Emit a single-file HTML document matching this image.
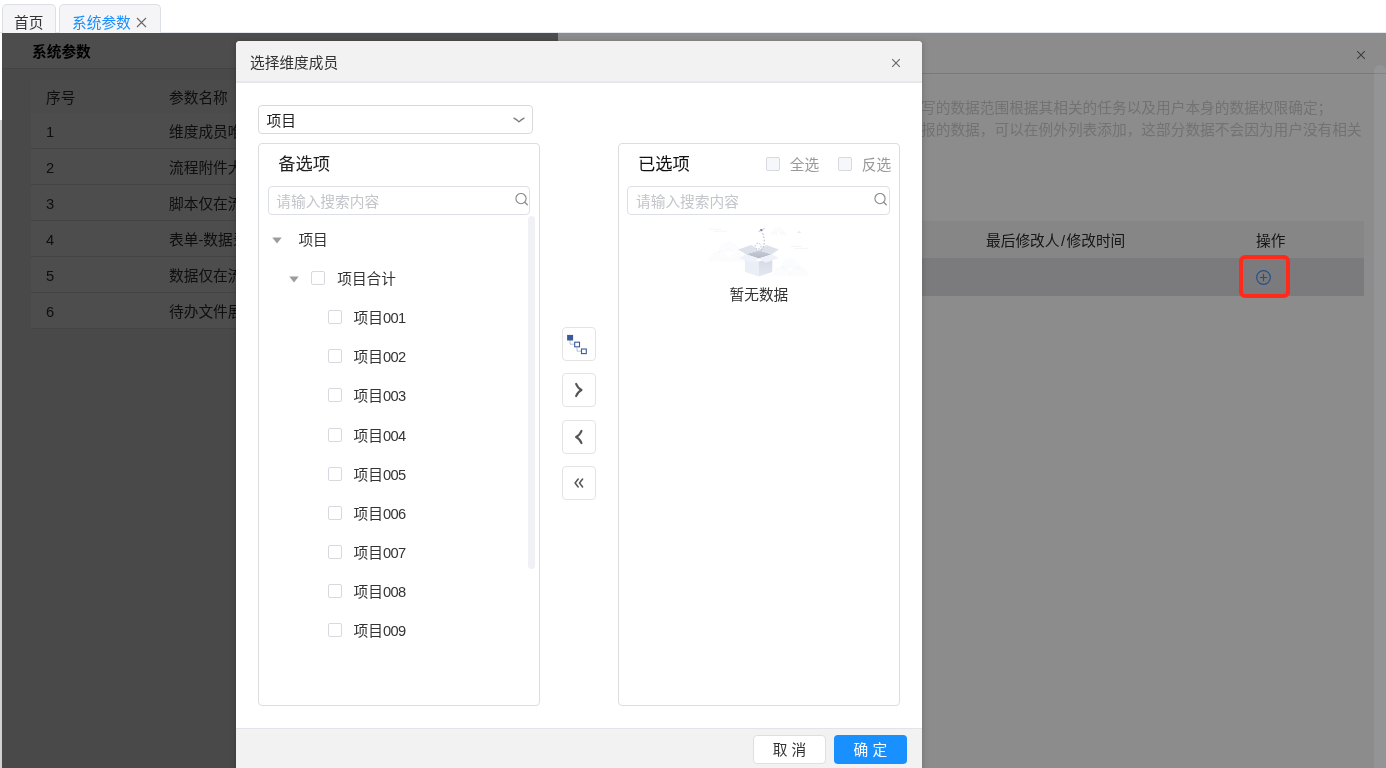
<!DOCTYPE html>
<html lang="zh-CN">
<head>
<meta charset="utf-8">
<title>系统参数</title>
<style>
*{box-sizing:border-box;margin:0;padding:0}
html,body{width:1386px;height:768px;overflow:hidden;background:#fff}
body{position:relative;font-family:"Liberation Sans","Noto Sans CJK SC",sans-serif;font-size:14.7px;color:#333}
.a{position:absolute}
.t{position:absolute;white-space:nowrap;line-height:20px;height:20px}
/* tabs */
.tab{position:absolute;top:4px;height:29px;background:#f5f5f7;border:1px solid #dcdfe6;border-bottom:none;border-radius:5px 5px 0 0}
/* left list panel */
#left{left:2px;top:33px;width:556px;height:735px;background:#f2f2f2;overflow:hidden}
#left .hd{left:0;top:0;width:556px;height:36px;background:#fff;border-bottom:1px solid #e0e0e0}
#left .th{left:29px;top:47px;width:527px;height:34px;background:#fafafa}
#left .tr{left:29px;width:527px;height:36px;background:#fff;border-bottom:1px solid #e4e4e4}
/* drawer */
#drawer{left:558px;top:33px;width:828px;height:735px;background:#fff;overflow:hidden}
.mask{position:absolute;background:rgba(0,0,0,.45)}
/* modal */
#modal{left:236px;top:41px;width:686px;height:740px;background:#fff;border-radius:4px;overflow:hidden;box-shadow:0 1px 6px rgba(0,0,0,.22)}
#modal .mh{left:0;top:0;width:686px;height:42px;background:#f2f2f2;border-bottom:2px solid #e6e8ee}
#modal .mf{left:0;top:687px;width:686px;height:60px;background:#f2f2f2;border-top:1px solid #e2e4ea}
.box{position:absolute;border:1px solid #dcdfe6;border-radius:4px;background:#fff}
.cb{position:absolute;width:14px;height:14px;border:1px solid #d6d9e0;border-radius:2px;background:#fff}
.cb.dis{background:#f5f7fa}
.ph{color:#c3c5cb}
.btn{position:absolute;width:34px;height:34px;border:1px solid #e4e4e4;border-radius:4px;background:#fff}
</style>
</head>
<body>
<div id="root" style="position:absolute;left:0;top:0;width:1386px;height:768px;will-change:transform;overflow:hidden">
<!-- tab bar -->
<div class="a" style="left:0;top:32px;width:1386px;height:1px;background:#e4e7ed"></div>
<div class="tab" style="left:2px;width:54px"></div>
<div class="tab" style="left:59px;width:102px"></div>
<div class="t" style="left:14px;top:13px;color:#333">首页</div>
<div class="t" style="left:72px;top:13px;color:#1890ff">系统参数</div>
<svg class="a" style="left:136px;top:17px" width="11" height="11" viewBox="0 0 11 11"><path d="M1 1L10 10M10 1L1 10" stroke="#666" stroke-width="1.1" fill="none"/></svg>
<!-- left strip -->
<div class="a" style="left:0;top:120px;width:2px;height:648px;background:#d2d2d2"></div>

<!-- left list panel -->
<div id="left" class="a">
  <div class="a hd"></div>
  <div class="t" style="left:30px;top:9px;font-weight:bold;color:#000">系统参数</div>
  <div class="a th"></div>
  <div class="t" style="left:44px;top:55px">序号</div>
  <div class="t" style="left:167px;top:55px">参数名称</div>
  <div class="a tr" style="top:80px"></div>
  <div class="a tr" style="top:116px"></div>
  <div class="a tr" style="top:152px"></div>
  <div class="a tr" style="top:188px"></div>
  <div class="a tr" style="top:224px"></div>
  <div class="a tr" style="top:260px"></div>
  <div class="t" style="left:44px;top:89px">1</div><div class="t" style="left:167px;top:89px">维度成员唯一性校验</div>
  <div class="t" style="left:44px;top:125px">2</div><div class="t" style="left:167px;top:125px">流程附件大小限制</div>
  <div class="t" style="left:44px;top:161px">3</div><div class="t" style="left:167px;top:161px">脚本仅在流程中执行</div>
  <div class="t" style="left:44px;top:197px">4</div><div class="t" style="left:167px;top:197px">表单-数据录入范围控制</div>
  <div class="t" style="left:44px;top:233px">5</div><div class="t" style="left:167px;top:233px">数据仅在流程中可填报</div>
  <div class="t" style="left:44px;top:269px">6</div><div class="t" style="left:167px;top:269px">待办文件展示方式</div>
  <div class="mask" style="left:0;top:0;width:556px;height:735px"></div>
</div>

<!-- drawer -->
<div id="drawer" class="a">
  <div class="a" style="left:0;top:40px;width:828px;height:1px;background:#dcdcdc"></div>
  <svg class="a" style="left:797.6px;top:16.7px" width="10" height="10" viewBox="0 0 10 10"><path d="M1.2 1.2L8.8 8.8M8.8 1.2L1.2 8.8" stroke="#707070" stroke-width="1.1" fill="none"/></svg>
  <div class="t" style="left:363px;top:65px;color:#d0d0d0">写的数据范围根据其相关的任务以及用户本身的数据权限确定；</div>
  <div class="t" style="left:363px;top:87px;color:#d0d0d0">报的数据，可以在例外列表添加，这部分数据不会因为用户没有相关</div>
  <div class="a" style="left:20px;top:188px;width:786px;height:37px;background:#f5f5f5"></div>
  <div class="a" style="left:20px;top:225px;width:786px;height:38px;background:#e0e1e5"></div>
  <div class="t" style="left:428px;top:198px;color:#2a2a2a">最后修改人<span style="margin:0 1.5px">/</span>修改时间</div>
  <div class="t" style="left:698px;top:198px;color:#2a2a2a">操作</div>
  <svg class="a" style="left:697px;top:236px" width="17" height="17" viewBox="0 0 17 17"><circle cx="8.5" cy="8.5" r="6.8" fill="none" stroke="#3a94fb" stroke-width="1.2"/><path d="M4.8 8.5H12.2M8.5 4.8V12.2" stroke="#3a94fb" stroke-width="1.2"/></svg>
</div>
<!-- global mask -->
<div class="mask" style="left:2px;top:33px;width:1384px;height:735px"></div>
<div class="a" style="left:1374px;top:65px;width:12px;height:703px;background:rgba(220,230,250,.1);border-radius:6px 6px 0 0"></div>
<!-- red annotation -->
<div class="a" style="left:1239px;top:255px;width:51px;height:43px;border:4px solid #ff2a1a;border-radius:6px"></div>

<!-- modal -->
<div id="modal" class="a">
  <div class="a mh"></div>
  <div class="t" style="left:14px;top:12px;color:#333">选择维度成员</div>
  <svg class="a" style="left:655.3px;top:16.8px" width="10" height="10" viewBox="0 0 10 10"><path d="M1.2 1.2L8.8 8.8M8.8 1.2L1.2 8.8" stroke="#666" stroke-width="1.1" fill="none"/></svg>

  <!-- select -->
  <div class="box" style="left:22px;top:64px;width:275px;height:29px;border-color:#d9d9d9"></div>
  <div class="t" style="left:30.5px;top:69.5px;color:#222">项目</div>
  <svg class="a" style="left:276.8px;top:75.8px" width="12" height="7" viewBox="0 0 12 7"><path d="M0.9 1.1Q4 2.6 6 4.9Q8 2.6 11.1 1.1" fill="none" stroke="#7c7c7c" stroke-width="1.3" stroke-linecap="round" stroke-linejoin="round"/></svg>
  <!-- left transfer panel -->
  <div class="box" style="left:22px;top:102.4px;width:282px;height:563px;border-color:#dcdde1"></div>
  <div class="t" style="left:42.3px;top:112.8px;font-size:17.3px;color:#222">备选项</div>
  <div class="box" style="left:32px;top:145px;width:262px;height:29px"></div>
  <div class="t ph" style="left:40.3px;top:151px">请输入搜索内容</div>
  <svg class="a" style="left:278.6px;top:152.1px" width="14" height="13" viewBox="0 0 14 13"><circle cx="6" cy="5.6" r="5.1" fill="none" stroke="#8c8c8c" stroke-width="1.15"/><path d="M9.7 9.3L12.3 11.8" stroke="#8c8c8c" stroke-width="1.3" stroke-linecap="round"/></svg>
  <div class="a" style="left:292.3px;top:175px;width:7px;height:352.5px;background:#f0f1f4;border-radius:4px"></div>
  <svg class="a" style="left:36.3px;top:196.0px" width="10" height="7" viewBox="0 0 10 7"><path d="M0.3 0.6H9.7L5 6.4Z" fill="#9c9c9c"/></svg>
  <div class="t" style="left:62.4px;top:188.6px">项目</div>
  <svg class="a" style="left:52.6px;top:235.2px" width="10" height="7" viewBox="0 0 10 7"><path d="M0.3 0.6H9.7L5 6.4Z" fill="#9c9c9c"/></svg>
  <div class="cb" style="left:75.3px;top:229.8px"></div>
  <div class="t" style="left:101.2px;top:227.8px">项目合计</div>
  <div class="cb" style="left:92.0px;top:268.9px"></div>
  <div class="t" style="left:117.6px;top:266.9px">项目<span style="letter-spacing:-0.65px">001</span></div>
  <div class="cb" style="left:92.0px;top:308.1px"></div>
  <div class="t" style="left:117.6px;top:306.1px">项目<span style="letter-spacing:-0.65px">002</span></div>
  <div class="cb" style="left:92.0px;top:347.3px"></div>
  <div class="t" style="left:117.6px;top:345.3px">项目<span style="letter-spacing:-0.65px">003</span></div>
  <div class="cb" style="left:92.0px;top:386.5px"></div>
  <div class="t" style="left:117.6px;top:384.5px">项目<span style="letter-spacing:-0.65px">004</span></div>
  <div class="cb" style="left:92.0px;top:425.6px"></div>
  <div class="t" style="left:117.6px;top:423.6px">项目<span style="letter-spacing:-0.65px">005</span></div>
  <div class="cb" style="left:92.0px;top:464.8px"></div>
  <div class="t" style="left:117.6px;top:462.8px">项目<span style="letter-spacing:-0.65px">006</span></div>
  <div class="cb" style="left:92.0px;top:504.0px"></div>
  <div class="t" style="left:117.6px;top:502.0px">项目<span style="letter-spacing:-0.65px">007</span></div>
  <div class="cb" style="left:92.0px;top:543.1px"></div>
  <div class="t" style="left:117.6px;top:541.1px">项目<span style="letter-spacing:-0.65px">008</span></div>
  <div class="cb" style="left:92.0px;top:582.3px"></div>
  <div class="t" style="left:117.6px;top:580.3px">项目<span style="letter-spacing:-0.65px">009</span></div>
  <!-- middle buttons -->
  <div class="btn" style="left:326px;top:286px"></div>
  <div class="btn" style="left:326px;top:332.4px"></div>
  <div class="btn" style="left:326px;top:379px"></div>
  <div class="btn" style="left:326px;top:425px"></div>
  <svg class="a" style="left:326px;top:286px" width="34" height="34" viewBox="0 0 34 34">
    <path d="M8 13.5V17.2H12.2M15 20.5V24.2H19" fill="none" stroke="#a9b9d8" stroke-width="0.9"/>
    <rect x="5.1" y="7.9" width="6" height="5.6" fill="#3c5a9a"/>
    <rect x="12.7" y="15.2" width="4.8" height="4.6" fill="#fff" stroke="#3c5a9a" stroke-width="1.1"/>
    <rect x="19.5" y="22" width="4.8" height="4.6" fill="#fff" stroke="#3c5a9a" stroke-width="1.1"/>
  </svg>
  <svg class="a" style="left:326px;top:332.4px" width="34" height="34" viewBox="0 0 34 34"><path d="M14.1 10.9Q15.8 15.2 19.5 17Q15.8 18.8 14.1 23.1" fill="none" stroke="#555" stroke-width="2.1" stroke-linecap="round" stroke-linejoin="round"/></svg>
  <svg class="a" style="left:326px;top:379px" width="34" height="34" viewBox="0 0 34 34"><path d="M19.5 10.9Q17.8 15.2 14.1 17Q17.8 18.8 19.5 23.1" fill="none" stroke="#555" stroke-width="2.1" stroke-linecap="round" stroke-linejoin="round"/></svg>
  <svg class="a" style="left:326px;top:425px" width="34" height="34" viewBox="0 0 34 34"><path d="M16.2 13L13.1 17L16.2 21M20.6 13L17.5 17L20.6 21" fill="none" stroke="#555" stroke-width="1.5" stroke-linecap="round" stroke-linejoin="round"/></svg>
  <!-- right transfer panel -->
  <div class="box" style="left:382px;top:102.4px;width:281.5px;height:563px;border-color:#dcdde1"></div>
  <div class="t" style="left:402px;top:112.9px;font-size:17.3px;color:#111">已选项</div>
  <div class="cb dis" style="left:529.8px;top:116.4px"></div>
  <div class="t" style="left:553.8px;top:114px;color:#999">全选</div>
  <div class="cb dis" style="left:602px;top:116.4px"></div>
  <div class="t" style="left:625.8px;top:114px;color:#999">反选</div>
  <div class="box" style="left:391px;top:145px;width:263px;height:29px"></div>
  <div class="t ph" style="left:400px;top:151px">请输入搜索内容</div>
  <svg class="a" style="left:637.6px;top:151.6px" width="14" height="13" viewBox="0 0 14 13"><circle cx="6" cy="5.6" r="5.1" fill="none" stroke="#8c8c8c" stroke-width="1.15"/><path d="M9.7 9.3L12.3 11.8" stroke="#8c8c8c" stroke-width="1.3" stroke-linecap="round"/></svg>
  <svg class="a" style="left:464px;top:179px" width="120" height="65" viewBox="0 0 1386 751">
    <defs><linearGradient id="gr" x1="0" y1="0" x2="0" y2="1"><stop offset="0" stop-color="#d3d8e4"/><stop offset="1" stop-color="#e4e8f2"/></linearGradient>
    <linearGradient id="gi" x1="0" y1="0" x2="0" y2="1"><stop offset="0" stop-color="#c9cdd8"/><stop offset="1" stop-color="#b4b9c5"/></linearGradient></defs>
    <g fill="none" stroke="#eef0f6" stroke-width="5"><path d="M313 370A22 22 0 0 1 357 370" /><path d="M291 370A44 44 0 0 1 379 370" /><path d="M269 370A66 66 0 0 1 401 370" /><path d="M247 370A88 88 0 0 1 423 370" /><path d="M225 370A110 110 0 0 1 445 370" /><path d="M193 480A22 22 0 0 1 237 480" /><path d="M171 480A44 44 0 0 1 259 480" /><path d="M149 480A66 66 0 0 1 281 480" /><path d="M127 480A88 88 0 0 1 303 480" /><path d="M105 480A110 110 0 0 1 325 480" /><path d="M410 480A20 20 0 0 1 450 480" /><path d="M390 480A40 40 0 0 1 470 480" /><path d="M370 480A60 60 0 0 1 490 480" /><path d="M350 480A80 80 0 0 1 510 480" /><path d="M330 480A100 100 0 0 1 530 480" /><path d="M1024 560A21 21 0 0 1 1066 560" /><path d="M1003 560A42 42 0 0 1 1087 560" /><path d="M982 560A63 63 0 0 1 1108 560" /><path d="M961 560A84 84 0 0 1 1129 560" /><path d="M940 560A105 105 0 0 1 1150 560" /><path d="M925 645A20 20 0 0 1 965 645" /><path d="M905 645A40 40 0 0 1 985 645" /><path d="M885 645A60 60 0 0 1 1005 645" /><path d="M865 645A80 80 0 0 1 1025 645" /><path d="M845 645A100 100 0 0 1 1045 645" /><path d="M1120 645A20 20 0 0 1 1160 645" /><path d="M1100 645A40 40 0 0 1 1180 645" /><path d="M1080 645A60 60 0 0 1 1200 645" /><path d="M1060 645A80 80 0 0 1 1220 645" /><path d="M1040 645A100 100 0 0 1 1240 645" /><path d="M885 150A20 20 0 0 1 925 150" /><path d="M865 150A40 40 0 0 1 945 150" /><path d="M845 150A60 60 0 0 1 965 150" /><path d="M830 180A20 20 0 0 1 870 180" /><path d="M810 180A40 40 0 0 1 890 180" /><path d="M940 180A20 20 0 0 1 980 180" /><path d="M920 180A40 40 0 0 1 1000 180" /></g>
    <g stroke="#e9ecf3" stroke-width="6" stroke-linecap="round"><path d="M115 107H245M160 130H310M1050 305H1175M1095 328H1245"/></g>
    <path d="M1120 150L1145 125L1170 150Z" fill="#e6e9f1"/>
    <path d="M520 430L680 480V652L520 600Z" fill="#eaeef7"/>
    <path d="M680 480L835 430V600L680 652Z" fill="url(#gr)"/>
    <path d="M530 395L680 350L830 395L680 445Z" fill="url(#gi)"/>
    <path d="M440 340L590 290L680 350L530 395Z" fill="#dde1eb"/>
    <path d="M910 340L765 290L680 350L830 395Z" fill="#dde1eb"/>
    <path d="M530 395L680 445L600 495L450 440Z" fill="#eff2fa"/>
    <path d="M830 395L680 445L760 495L910 440Z" fill="#eff2fa"/>
    <path d="M705 350Q770 280 722 145" fill="none" stroke="#8f97b3" stroke-width="9" stroke-dasharray="18 20"/>
    <circle cx="672" cy="302" r="34" fill="none" stroke="#9aa2bd" stroke-width="8" stroke-dasharray="16 18"/>
    <ellipse cx="708" cy="117" rx="16" ry="13" fill="#747c9b"/>
    <ellipse cx="735" cy="103" rx="16" ry="8" fill="#cfd5e6" transform="rotate(-25 735 103)"/>
    <ellipse cx="688" cy="128" rx="16" ry="8" fill="#cfd5e6" transform="rotate(-25 688 128)"/>
  </svg>
  <div class="t" style="left:493.5px;top:244.3px;color:#333">暂无数据</div>
  <!-- footer -->
  <div class="a mf"></div>
  <div class="a" style="left:517px;top:694.4px;width:72.5px;height:28.6px;background:#fff;border:1px solid #dcdfe6;border-radius:4px"></div>
  <div class="t" style="left:517.5px;top:699px;width:72px;text-align:center;color:#333">取 消</div>
  <div class="a" style="left:597.6px;top:694px;width:73.5px;height:29px;background:#1890ff;border-radius:4px"></div>
  <div class="t" style="left:597.6px;top:699px;width:73.5px;text-align:center;color:#fff">确 定</div>
</div>
</div>
</body>
</html>
